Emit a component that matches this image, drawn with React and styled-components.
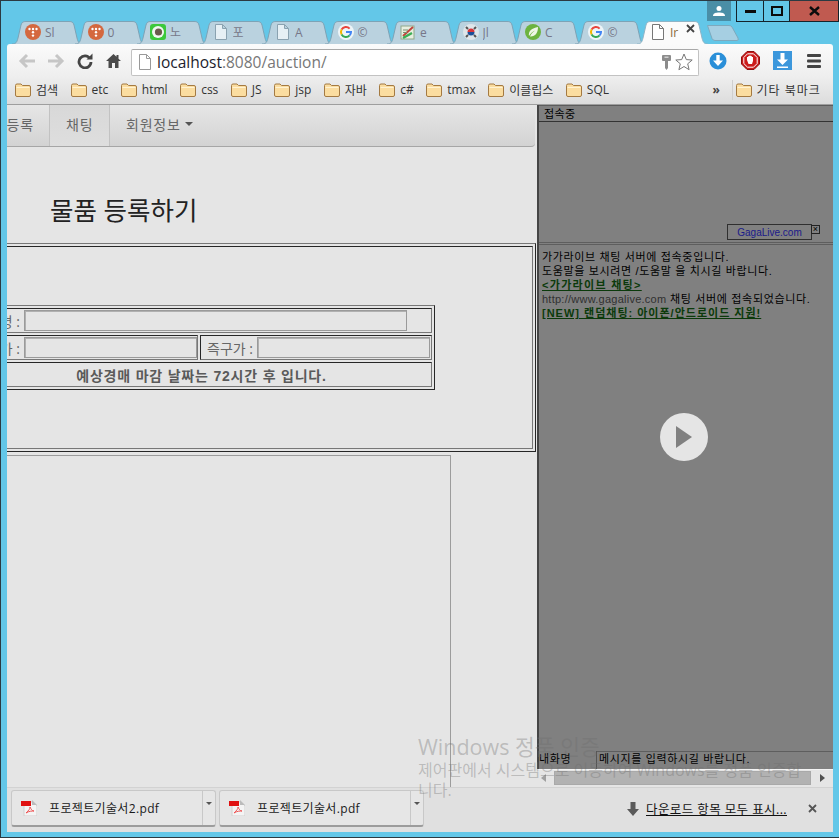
import React from 'react';
import styled, { createGlobalStyle } from 'styled-components';

const KR = '"Open Sans", "Noto Sans CJK KR", sans-serif';
const ARIAL_KR = '"Liberation Sans", "Noto Sans CJK KR", sans-serif';
const GRID_DARK = '#262626';
const GRID_GREY = '#777';

const GlobalStyle = createGlobalStyle`
  html, body { margin: 0; padding: 0; background: #63c7e8; }
  * { box-sizing: border-box; }
`;

const Frame = styled.div`
  position: relative;
  width: 839px;
  height: 838px;
  overflow: hidden;
  display: flex;
  flex-direction: column;
  background: #63c7e8;
  border-top: 1px solid #2b3a42;
  border-left: 1px solid #2b3a42;
  border-bottom: 1px solid #2b3a42;
  font-family: ${KR};
`;

const TitleBar = styled.div`
  height: 20px;
  display: flex;
  justify-content: flex-end;
  align-items: flex-start;
`;

const ProfileButton = styled.div`
  width: 24px;
  height: 20px;
  margin-right: 6px;
  background: #4a8ea6;
  display: flex;
  align-items: center;
  justify-content: center;
`;

const WinButton = styled.div`
  width: ${(p) => p.$w}px;
  height: 21px;
  margin-left: -1px;
  border: 1px solid #14232b;
  border-top: none;
  background: ${(p) => p.$bg || 'transparent'};
  display: flex;
  align-items: center;
  justify-content: center;
`;

const TabStrip = styled.div`
  height: 23px;
  margin-left: 11px;
  display: flex;
  align-items: stretch;
`;

const Tab = styled.div`
  position: relative;
  flex: none;
  width: 71px;
  margin-right: -8.5px;
  padding: 3px 0 0 13px;
  display: flex;
  align-items: flex-start;
  gap: 4px;
  z-index: ${(p) => (p.$active ? 2 : 1)};
`;

const TabShape = styled.svg`
  position: absolute;
  left: 0;
  top: 0;
  width: 71px;
  height: 23px;
  z-index: -1;
`;

const TabLabel = styled.span`
  width: ${(p) => (p.$active ? 12 : 13)}px;
  overflow: hidden;
  white-space: nowrap;
  font-size: 12px;
  line-height: 17px;
  color: ${(p) => (p.$active ? '#8a6a3a' : '#778')};
`;

const NewTab = styled.svg`
  flex: none;
  width: 32px;
  height: 16px;
  margin: 4px 0 0 7px;
`;

const Browser = styled.div`
  flex: 1;
  margin: 0 6px 5px 6px;
  display: flex;
  flex-direction: column;
  min-height: 0;
  border-radius: 3px 3px 0 0;
  overflow: hidden;
`;

const Toolbar = styled.div`
  height: 33px;
  flex: none;
  padding-left: 5px;
  display: flex;
  align-items: center;
  background: linear-gradient(#fbfbfb, #eeeeee);
`;

const ToolButton = styled.div`
  width: ${(p) => p.$w || 29}px;
  height: 24px;
  flex: none;
  display: flex;
  align-items: center;
  justify-content: center;
`;

const Omnibox = styled.div`
  width: 568px;
  height: 27px;
  flex: none;
  margin: 3px 3px 0 3px;
  padding: 0 2px 0 5px;
  display: flex;
  align-items: center;
  background: #fff;
  border: 1px solid #c2c2c2;
  border-top-color: #a8a8a8;
  border-radius: 2px;
`;

const Url = styled.div`
  margin-left: 4px;
  flex: 1;
  font-family: "Open Sans", sans-serif;
  font-size: 15.5px;
  white-space: nowrap;
  color: #1d1d2d;
  span { color: #777; }
`;

const Bookmarks = styled.div`
  height: 28px;
  flex: none;
  padding: 0 0 2px 8px;
  display: flex;
  align-items: center;
  gap: 12.5px;
  background: linear-gradient(#eeeeee, #dcdcdc);
  border-bottom: 1px solid #9e9e9e;
`;

const Bookmark = styled.div`
  display: flex;
  align-items: center;
  gap: 5px;
  font-size: 12px;
  color: #333;
  white-space: nowrap;
  margin-left: ${(p) => p.$ml || 0}px;
  letter-spacing: ${(p) => p.$sp || 0}px;
`;

const Chevrons = styled.span`
  margin-left: 91px;
  font-size: 12px;
  color: #444;
  font-weight: 700;
  width: 16px;
`;

const BarDivider = styled.div`
  width: 1px;
  height: 20px;
  margin-left: -9px;
  background: #cfcfcf;
`;

const Main = styled.div`
  flex: 1;
  min-height: 0;
  display: flex;
`;

const LeftPane = styled.div`
  width: 530px;
  flex: none;
  overflow: hidden;
  background: #e5e5e5;
`;

const ScrollArea = styled.div`
  width: 590px;
  height: 100%;
  margin-left: -60px;
  display: flex;
  flex-direction: column;
`;

const Nav = styled.div`
  width: 588px;
  height: 42px;
  flex: none;
  display: flex;
  background: linear-gradient(#e6e6e6, #d3d3d3);
  border-bottom: 1px solid #a6a6a6;
  border-radius: 0 0 4px 0;
  font-size: 14px;
  color: #666;
`;

const NavItem = styled.div`
  width: ${(p) => p.$w}px;
  display: flex;
  align-items: center;
  justify-content: ${(p) => (p.$end ? 'flex-end' : 'flex-start')};
  padding: ${(p) => (p.$end ? '0 15px 3px 0' : '0 0 3px 16px')};
  border-right: ${(p) => (p.$divider ? '1px solid #c2c2c2' : 'none')};
  background: ${(p) => (p.$active ? 'linear-gradient(#d8d8d8, #dedede)' : 'transparent')};
  letter-spacing: 0.8px;
  white-space: nowrap;
`;

const Caret = styled.span`
  display: inline-block;
  margin-left: 4px;
  border-top: 4px solid #555;
  border-left: 4px solid transparent;
  border-right: 4px solid transparent;
`;

const Heading = styled.h1`
  margin: 0;
  height: 96px;
  flex: none;
  padding: 44px 0 0 103px;
  font-family: ${KR};
  font-size: 25.5px;
  line-height: 38px;
  font-weight: 400;
  color: #222;
`;

const GridTable = styled.div`
  width: ${(p) => p.$w}px;
  flex: none;
  padding: 2px;
  display: flex;
  flex-direction: column;
  gap: 2px;
  border: 1px solid;
  border-color: ${GRID_GREY} ${GRID_DARK} ${GRID_DARK} ${GRID_GREY};
`;

const GridRow = styled.div`
  display: flex;
  gap: 2px;
`;

const GridCell = styled.div`
  flex: ${(p) => (p.$w ? 'none' : '1 0 auto')};
  width: ${(p) => (p.$w ? `${p.$w}px` : 'auto')};
  height: ${(p) => p.$h}px;
  padding: ${(p) => p.$pad || '1px'};
  display: flex;
  align-items: center;
  justify-content: ${(p) => (p.$center ? 'center' : 'flex-start')};
  border: 1px solid;
  border-color: ${GRID_DARK} ${GRID_GREY} ${GRID_GREY} ${GRID_DARK};
`;

const FieldLabel = styled.span`
  flex: none;
  width: ${(p) => p.$w}px;
  padding-right: 4px;
  text-align: right;
  font-size: 14px;
  color: #666;
  white-space: nowrap;
`;

const Field = styled.div`
  height: 21px;
  width: ${(p) => p.$w}px;
  flex: none;
  border: 1px solid #9a9a9a;
  box-shadow: inset 1px 1px 0 #b0b0b0;
`;

const Notice = styled.span`
  font-family: ${ARIAL_KR};
  font-size: 14px;
  font-weight: 700;
  letter-spacing: 0.8px;
  color: #5a5a5a;
  white-space: nowrap;
`;

const FrameBox = styled.div`
  flex: 1;
  width: 504px;
  margin-top: 3px;
  border: 1px solid #9c9c9c;
  border-bottom: none;
`;

const RightPane = styled.div`
  flex: 1;
  min-width: 0;
  display: flex;
  flex-direction: column;
  background: #808080;
  border-left: 2px solid #454545;
  color: #000;
  font-family: ${ARIAL_KR};
  font-size: 11px;
`;

const PaneHeader = styled.div`
  height: 17px;
  flex: none;
  padding-left: 5px;
  line-height: 17px;
  letter-spacing: 0.4px;
  border-bottom: 1px solid #333;
  border-top: 1px solid #5c5c5c;
`;

const AdPane = styled.div`
  position: relative;
  height: 121px;
  flex: none;
  border-bottom: 1px solid #5e5e5e;
`;

const AdBadge = styled.div`
  position: absolute;
  right: 21px;
  bottom: 2px;
  width: 85px;
  height: 16px;
  border: 1px solid #2f2f2f;
  text-align: center;
  line-height: 15px;
  font-size: 10px;
  color: #1a1a8a;
`;

const AdClose = styled.div`
  position: absolute;
  right: 13px;
  bottom: 8px;
  width: 9px;
  height: 9px;
  border: 1px solid #222;
  line-height: 6px;
  font-size: 9px;
  text-align: center;
`;

const ChatPane = styled.div`
  position: relative;
  flex: 1;
  min-height: 0;
  margin-top: 1px;
  padding: 5px 0 0 3px;
  border-top: 1px solid #5e5e5e;
`;

const ChatLine = styled.div`
  height: 14px;
  line-height: 14px;
  white-space: nowrap;
  letter-spacing: ${(p) => p.$sp || 0.65}px;
`;

const ChatLink = styled(ChatLine)`
  color: #0b3a0b;
  font-weight: 700;
  text-decoration: underline;
  letter-spacing: ${(p) => p.$sp || 1.3}px;
`;

const Muted = styled.span`
  color: #303030;
  letter-spacing: 0.25px;
`;

const PlayButton = styled.div`
  position: absolute;
  left: 121px;
  top: 168px;
  width: 48px;
  height: 48px;
  border-radius: 50%;
  background: #e5e5e5;
  display: flex;
  align-items: center;
  justify-content: center;
`;

const InputRow = styled.div`
  height: 18px;
  flex: none;
  display: flex;
  align-items: flex-start;
`;

const NameCell = styled.div`
  width: 58px;
  height: 18px;
  flex: none;
  line-height: 14px;
  padding-top: 1px;
  letter-spacing: 0.6px;
  border-right: 1px solid #555;
`;

const MessageCell = styled.div`
  flex: 1;
  height: 18px;
  padding-left: 2px;
  line-height: 15px;
  letter-spacing: 0.65px;
  border-top: 1px solid #5e5e5e;
`;

const HScroll = styled.div`
  height: 18px;
  flex: none;
  margin-left: -2px;
  padding: 1px 0 2px 0;
  display: flex;
  align-items: center;
  background: #e5e5e5;
  border-top: 1px solid #f4f4f4;
`;

const ScrollThumb = styled.div`
  width: 257px;
  height: 14px;
  margin: 0 8px 0 8px;
  background: #b2b2b2;
  border: 1px solid #a9a9a9;
`;

const Arrow = styled.span`
  width: 0;
  height: 0;
  margin-left: ${(p) => p.$ml}px;
  border-top: 4px solid transparent;
  border-bottom: 4px solid transparent;
  border-left: ${(p) => (p.$right ? '5px solid #505050' : 'none')};
  border-right: ${(p) => (p.$right ? 'none' : '5px solid #a0a0a0')};
`;

const DownloadBar = styled.div`
  height: 45px;
  flex: none;
  padding: 2px 0 0 4px;
  display: flex;
  gap: 3px;
  background: #e0e0e0;
  border-top: 1px solid #d2d2d2;
`;

const DownloadItem = styled.div`
  width: 205px;
  height: 37px;
  flex: none;
  display: flex;
  align-items: stretch;
  background: #e6e6e6;
  border: 1px solid #c8c8c8;
  border-bottom: 2px solid #9c9c9c;
  border-radius: 3px;
`;

const DownloadName = styled.div`
  flex: 1;
  display: flex;
  align-items: center;
  gap: 12px;
  padding-left: 9px;
  font-size: 12px;
  letter-spacing: 0.35px;
  color: #1a1a1a;
  white-space: nowrap;
`;

const DownloadMenu = styled.div`
  width: 13px;
  flex: none;
  padding: 11px 0 0 3px;
  border-left: 1px solid #c8c8c8;
`;

const MiniCaret = styled.div`
  width: 0;
  height: 0;
  border-top: 3px solid #555;
  border-left: 3px solid transparent;
  border-right: 3px solid transparent;
`;

const ShowAll = styled.div`
  margin-left: auto;
  height: 37px;
  padding-right: 16px;
  display: flex;
  align-items: center;
  font-size: 12.5px;
  color: #111;
`;

const ShowAllLink = styled.span`
  margin: 0 21px 0 7px;
  text-decoration: underline;
  letter-spacing: 0.4px;
  white-space: nowrap;
`;

const Watermark = styled.div`
  position: absolute;
  left: 417px;
  top: 733px;
  color: rgba(110, 110, 110, 0.36);
  font-size: 16px;
  line-height: 20px;
  white-space: nowrap;
  pointer-events: none;
`;

const WatermarkTitle = styled.div`
  font-size: 21.5px;
  line-height: 26px;
`;

const Svg = ({ size = 16, h, children, vb }) => (
  <svg width={size} height={h || size} viewBox={vb || `0 0 ${size} ${h || size}`}>
    {children}
  </svg>
);

const TDots = () => (
  <Svg>
    <circle cx="8" cy="8" r="8" fill="#d4683f" />
    {[4.5, 8, 11.5].map((x) => <circle key={x} cx={x} cy="5" r="1.2" fill="#fff" />)}
    <circle cx="8" cy="8.3" r="1.2" fill="#fff" />
    <circle cx="8" cy="11.6" r="1.2" fill="#fff" />
  </Svg>
);

const GreenEye = () => (
  <Svg>
    <rect width="16" height="16" rx="3" fill="#3cc83c" />
    <circle cx="8" cy="8" r="6" fill="#f2f7f2" />
    <circle cx="8.5" cy="8" r="3.6" fill="#6a5a4c" />
  </Svg>
);

const Doc = ({ stroke = '#8aa2b0', fill = '#e6f0f5' }) => (
  <Svg>
    <path d="M2.5 .5H9.5L13.5 4.5V15.5H2.5Z M9.5 .5V4.5H13.5" fill={fill} stroke={stroke} />
  </Svg>
);

const GoogleG = () => (
  <Svg>
    <circle cx="8" cy="8" r="8" fill="#eef5f8" />
    <path d="M11.6 4.6A5 5 0 0 0 3.6 5.6" fill="none" stroke="#e8453c" strokeWidth="2" />
    <path d="M3.6 5.6A5 5 0 0 0 3.6 10.4" fill="none" stroke="#f4b400" strokeWidth="2" />
    <path d="M3.6 10.4A5 5 0 0 0 11.6 11.4" fill="none" stroke="#34a853" strokeWidth="2" />
    <path d="M11.6 11.4A5 5 0 0 0 13 8H8" fill="none" stroke="#4285f4" strokeWidth="2" />
  </Svg>
);

const NotePad = () => (
  <Svg>
    <rect x="1" y="2" width="13" height="13" fill="#e8efe0" stroke="#8fa88a" />
    <path d="M3 12L13 3" stroke="#c0453c" strokeWidth="2" />
    <path d="M3 14L12 9" stroke="#3cae55" strokeWidth="2.4" />
    <path d="M3 6H8M3 8.500H7" stroke="#7a8f6f" />
  </Svg>
);

const KoreaFlag = () => (
  <Svg>
    <circle cx="8" cy="8" r="8" fill="#dfe6ea" />
    <path d="M3 3L5 5M13 3L11 5M3 13L5 11M13 13L11 11" stroke="#555" strokeWidth="2" />
    <path d="M4.500 8A3.500 3.500 0 0 1 11.500 8Z" fill="#d8353a" />
    <path d="M4.500 8A3.500 3.500 0 0 0 11.500 8Z" fill="#1d4f98" />
  </Svg>
);

const SpringLeaf = () => (
  <Svg>
    <circle cx="8" cy="8" r="8" fill="#6cb33f" />
    <path d="M4 12C3 7 7 4 13 3C13 9 10 13 5 12.500C6 9.500 8 8 10 6.500C7.500 7.500 5.500 9.500 4 12Z" fill="#eef6e6" />
  </Svg>
);

const FAVICONS = {
  t: <TDots />,
  eye: <GreenEye />,
  doc: <Doc />,
  g: <GoogleG />,
  note: <NotePad />,
  kr: <KoreaFlag />,
  spring: <SpringLeaf />,
};

const TABS = [
  ['t', 'Sl'], ['t', '0'], ['eye', '노'], ['doc', '포'], ['doc', 'A'], ['g', '©'],
  ['note', 'e'], ['kr', 'Jl'], ['spring', 'C'], ['g', '©'],
];

const TabOutline = ({ active }) => (
  <TabShape viewBox="0 0 71 23">
    <path
      d="M0 23C4 23 5 21 6 17L9 4C10 1 11 .5 14 .5H57C60 .5 61 1 62 4L65 17C66 21 67 23 71 23"
      fill={active ? '#fbfbfb' : '#bad2df'}
      stroke={active ? '#8fb4c6' : '#7da3b6'}
    />
  </TabShape>
);

const FolderIcon = () => (
  <Svg size={16} h={14}>
    <path d="M.5 2.500Q.5 1 2 1H6L7.500 2.500H14Q15.500 2.500 15.500 4V12Q15.500 13.500 14 13.500H2Q.5 13.500 .5 12Z" fill="#fbdda0" stroke="#a47a42" />
    <path d="M1.500 4.500H14.500" stroke="#fff2d2" />
  </Svg>
);

const BOOKMARKS = ['검색', 'etc', 'html', 'css', 'JS', 'jsp', '자바', 'c#', 'tmax', '이클립스', 'SQL'];

const PdfIcon = () => (
  <Svg>
    <path d="M3 2H12L16 6V16H3Z" fill="#f4f4f4" stroke="#d0d0d0" />
    <path d="M11 0L16 5H11Z" fill="#bbb" />
    <rect x="0" y="1" width="10" height="5" fill="#e01010" />
    <path d="M5 13C8 10 9 9 9 7C10 9 11 11 13 11C11 11 8 11 5 13Z" fill="none" stroke="#e55" />
  </Svg>
);

const DownloadEntry = ({ name }) => (
  <DownloadItem>
    <DownloadName>
      <PdfIcon />
      {name}
    </DownloadName>
    <DownloadMenu><MiniCaret /></DownloadMenu>
  </DownloadItem>
);

const App = () => (
  <Frame>
    <GlobalStyle />
    <TitleBar>
      <ProfileButton>
        <Svg size={12}>
          <circle cx="6" cy="3.500" r="2.500" fill="#fff" />
          <path d="M0 11C0 8 3 7.500 6 7.500S12 8 12 11Z" fill="#fff" />
        </Svg>
      </ProfileButton>
      <WinButton $w={28}>
        <Svg size={11} h={4}><rect width="11" height="3" y="1" fill="#0c0c0c" /></Svg>
      </WinButton>
      <WinButton $w={27}>
        <Svg size={12} h={10}><rect x="1" y="1" width="10" height="8" fill="none" stroke="#0c0c0c" strokeWidth="2" /></Svg>
      </WinButton>
      <WinButton $w={50} $bg="#c05a50">
        <Svg size={11} h={10}><path d="M1 1L10 9M10 1L1 9" stroke="#0c0c0c" strokeWidth="2.400" /></Svg>
      </WinButton>
    </TitleBar>

    <TabStrip>
      {TABS.map(([icon, label], i) => (
        <Tab key={`${label}${i}`}>
          <TabOutline />
          {FAVICONS[icon]}
          <TabLabel>{label}</TabLabel>
        </Tab>
      ))}
      <Tab $active>
        <TabOutline active />
        <Doc stroke="#777" fill="#fff" />
        <TabLabel $active>Ir</TabLabel>
        <Svg size={9} h={9}><path d="M1 1L8 8M8 1L1 8" stroke="#444" strokeWidth="1.800" /></Svg>
      </Tab>
      <NewTab viewBox="0 0 32 16">
        <path d="M.5 .5H22Q24 .5 25 2L31 13Q32 15.500 30 15.500H8Q6 15.500 5 13.500Z" fill="#a6cfe2" stroke="#7da9bd" />
      </NewTab>
    </TabStrip>

    <Browser>
      <Toolbar>
        <ToolButton>
          <Svg size={18} h={16}><path d="M9 2L3 8L9 14M3 8H17" fill="none" stroke="#c6c6c6" strokeWidth="3" /></Svg>
        </ToolButton>
        <ToolButton>
          <Svg size={18} h={16}><path d="M9 2L15 8L9 14M15 8H1" fill="none" stroke="#c6c6c6" strokeWidth="3" /></Svg>
        </ToolButton>
        <ToolButton>
          <Svg>
            <path d="M13 5.500A6 6 0 1 0 14 9" fill="none" stroke="#454545" strokeWidth="2.800" />
            <path d="M9.500 6.500H15.500V.5Z" fill="#454545" />
          </Svg>
        </ToolButton>
        <ToolButton>
          <Svg size={15}>
            <path d="M7.500 1L0 8H2.500V15H6V10H9V15H12.500V8H15L12.500 5.700V2H10.500V3.800Z" fill="#4a4a4a" />
          </Svg>
        </ToolButton>
        <Omnibox>
          <Doc stroke="#999" fill="#fff" />
          <Url>localhost<span>:8080/auction/</span></Url>
          <Svg size={11} h={17}>
            <path d="M1 2Q1 1 2 1H9Q10 1 10 2V6Q10 7 9 7H7V14L5.500 16L4 14V7H2Q1 7 1 6Z" fill="#8c8c8c" />
            <rect x="3.500" y="2.500" width="4" height="1.500" fill="#cfcfcf" />
          </Svg>
          <ToolButton $w={24}>
            <Svg size={18}>
              <path d="M9 1L11.300 6.600L17.200 7L12.700 10.800L14.100 16.700L9 13.500L3.900 16.700L5.300 10.800L.8 7L6.700 6.600Z" fill="#fff" stroke="#777" />
            </Svg>
          </ToolButton>
        </Omnibox>
        <ToolButton $w={32}>
          <Svg size={18}>
            <circle cx="9" cy="9" r="8.500" fill="#2a8fd8" />
            <path d="M7.300 3H10.700V8.500H14L9 14L4 8.500H7.300Z" fill="#fff" />
          </Svg>
        </ToolButton>
        <ToolButton $w={32}>
          <Svg size={19}>
            <path d="M6 .5H13L18.500 6V13L13 18.500H6L.5 13V6Z" fill="#cc1b1b" stroke="#8e1010" />
            <path d="M6.500 2.800H12.500L16.200 6.500V12.500L12.500 16.200H6.500L2.800 12.500V6.500Z" fill="#cc1b1b" stroke="#fff" />
            <path d="M6 9V6H7.200V5H8.400V4.500H9.600V5H10.800V6H12V10L11 13H7.500Z" fill="#fff" />
          </Svg>
        </ToolButton>
        <ToolButton $w={32}>
          <Svg size={19}>
            <rect width="19" height="19" fill="#3c97dc" />
            <path d="M7.500 2H11.500V8.500H15L9.500 14L4 8.500H7.500Z" fill="#fff" />
            <rect x="4" y="15.500" width="11" height="1.500" fill="#fff" />
          </Svg>
        </ToolButton>
        <ToolButton $w={32}>
          <Svg size={14} h={14}>
            <rect y="0" width="14" height="3" rx="1" fill="#444" />
            <rect y="5.500" width="14" height="3" rx="1" fill="#444" />
            <rect y="11" width="14" height="3" rx="1" fill="#444" />
          </Svg>
        </ToolButton>
      </Toolbar>

      <Bookmarks>
        {BOOKMARKS.map((b) => (
          <Bookmark key={b}><FolderIcon />{b}</Bookmark>
        ))}
        <Chevrons>»</Chevrons>
        <BarDivider />
        <Bookmark $ml={-10} $sp={1}><FolderIcon />기타 북마크</Bookmark>
      </Bookmarks>

      <Main>
        <LeftPane>
          <ScrollArea>
            <Nav>
              <NavItem $w={103} $end $divider>물품 등록</NavItem>
              <NavItem $w={60} $active $divider>채팅</NavItem>
              <NavItem $w={120}>회원정보<Caret /></NavItem>
            </Nav>
            <Heading>물품 등록하기</Heading>
            <GridTable $w={589}>
              <GridCell $h={203} $pad="0 0 0 17px">
                <GridTable $w={467}>
                  <GridRow>
                    <GridCell $h={25} $pad="0">
                      <FieldLabel $w={52}>물품명 :</FieldLabel>
                      <Field $w={383} />
                    </GridCell>
                  </GridRow>
                  <GridRow>
                    <GridCell $w={227} $h={25} $pad="0">
                      <FieldLabel $w={52}>경매가 :</FieldLabel>
                      <Field $w={173} />
                    </GridCell>
                    <GridCell $h={25} $pad="0">
                      <FieldLabel $w={56}>즉구가 :</FieldLabel>
                      <Field $w={173} />
                    </GridCell>
                  </GridRow>
                  <GridRow>
                    <GridCell $h={25} $pad="0" $center>
                      <Notice>예상경매 마감 날짜는 72시간 후 입니다.</Notice>
                    </GridCell>
                  </GridRow>
                </GridTable>
              </GridCell>
            </GridTable>
            <FrameBox />
          </ScrollArea>
        </LeftPane>

        <RightPane>
          <PaneHeader>접속중</PaneHeader>
          <AdPane>
            <AdBadge>GagaLive.com</AdBadge>
            <AdClose>×</AdClose>
          </AdPane>
          <ChatPane>
            <ChatLine>가가라이브 채팅 서버에 접속중입니다.</ChatLine>
            <ChatLine>도움말을 보시려면 /도움말 을 치시길 바랍니다.</ChatLine>
            <ChatLink>&lt;가가라이브 채팅&gt;</ChatLink>
            <ChatLine><Muted>http://www.gagalive.com</Muted> 채팅 서버에 접속되었습니다.</ChatLine>
            <ChatLink $sp={1}>[NEW] 랜덤채팅: 아이폰/안드로이드 지원!</ChatLink>
            <PlayButton>
              <Svg size={16} h={22}><path d="M0 0L16 11L0 22Z" fill="#808080" /></Svg>
            </PlayButton>
          </ChatPane>
          <InputRow>
            <NameCell>내화명</NameCell>
            <MessageCell>메시지를 입력하시길 바랍니다.</MessageCell>
          </InputRow>
          <HScroll>
            <Arrow $ml={4} />
            <ScrollThumb />
            <Arrow $ml={1} $right />
          </HScroll>
        </RightPane>
      </Main>

      <DownloadBar>
        <DownloadEntry name="프로젝트기술서2.pdf" />
        <DownloadEntry name="프로젝트기술서.pdf" />
        <ShowAll>
          <Svg size={12} h={14}><path d="M3.500 0H8.500V7H12L6 14L0 7H3.500Z" fill="#5a5a5a" /></Svg>
          <ShowAllLink>다운로드 항목 모두 표시...</ShowAllLink>
          <Svg size={9} h={9}><path d="M1 1L8 8M8 1L1 8" stroke="#555" strokeWidth="1.800" /></Svg>
        </ShowAll>
      </DownloadBar>
    </Browser>

    <Watermark>
      <WatermarkTitle>Windows 정품 인증</WatermarkTitle>
      제어판에서 시스템으로 이동하여 Windows를 정품 인증합
      <br />
      니다.
    </Watermark>
  </Frame>
);

export default App;
